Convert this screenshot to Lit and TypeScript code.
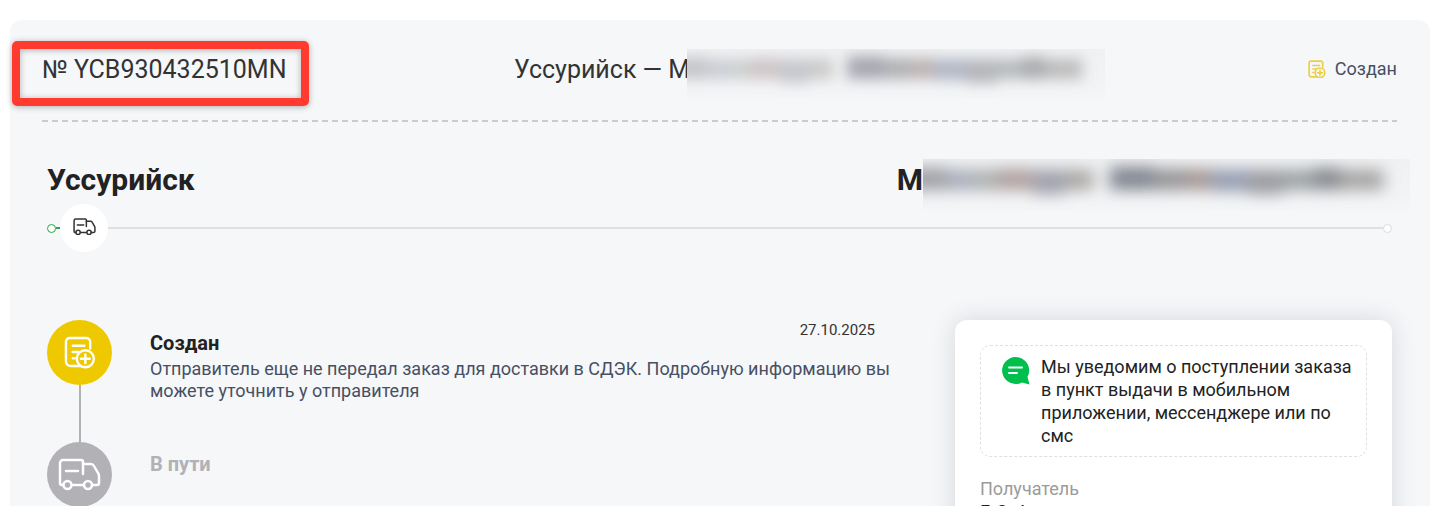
import { LitElement, html, css, svg } from "lit";
import { customElement, property } from "lit/decorators.js";

const orderPaths = svg`
  <path d="M17 31H8a5 5 0 0 1-5-5V6a4 4 0 0 1 4-4h17a4 4 0 0 1 4 4v7"/>
  <path d="M10 10h12M10 16.500h6M10 23h2"/>
  <circle cx="23" cy="23.500" r="8.800"/>
  <path d="M23 19v9M18.500 23.500h9"/>`;

const truckPaths = svg`
  <path d="M4 26H3a2 2 0 0 1-2-2V4a3 3 0 0 1 3-3h18a2 2 0 0 1 2 2v12"/>
  <path d="M24 5h8q2 0 3 2l4 7q1 1 1 3v7a2 2 0 0 1-2 2h-5M13 26h11"/>
  <path d="M7 12h12"/>
  <circle cx="8.500" cy="26" r="4"/><circle cx="29" cy="26" r="4"/>`;

@customElement("status-icon")
class StatusIcon extends LitElement {
  @property() name = "order";
  static styles = css`
    :host { display: block; }
    svg { display: block; width: 100%; fill: none; stroke: currentColor; stroke-width: var(--stroke, 2.5); stroke-linecap: round; stroke-linejoin: round; }
  `;
  render() {
    return this.name === "truck"
      ? html`<svg viewBox="-1 -1 43 33" aria-hidden="true">${truckPaths}</svg>`
      : html`<svg viewBox="1 0 33 34" aria-hidden="true">${orderPaths}</svg>`;
  }
}

@customElement("redacted-text")
class RedactedText extends LitElement {
  static styles = css`
    :host { display: block; overflow: hidden; background: linear-gradient(#f0f1f3, #f2f3f5 70%, #f5f6f8); }
    svg { display: block; width: 100%; height: 100%; }
  `;
  @property({ type: Boolean }) strong = false;
  render() {
    const lead = this.strong ? 0.66 : 0.36;
    const tail = this.strong ? 0.74 : 0.52;
    return html`<svg viewBox="0 0 480 50" preserveAspectRatio="none" aria-hidden="true">
      <defs><filter id="soft" x="-10%" y="-80%" width="120%" height="260%"><feGaussianBlur stdDeviation="8 7"/></filter></defs>
      <g filter="url(#soft)">
        <g fill-opacity=${lead}>
          <rect x="-20" y="8" width="44" height="22" fill="#77797e"/>
          <rect x="24" y="10" width="24" height="20" fill="#858a9e"/>
          <rect x="48" y="10" width="24" height="20" fill="#8a928e"/>
          <rect x="72" y="9" width="36" height="21" fill="#907876"/>
          <rect x="108" y="10" width="32" height="24" fill="#777988"/>
          <rect x="140" y="10" width="28" height="20" fill="#87837c"/>
        </g>
        <g fill-opacity=${tail}>
          <rect x="184" y="7" width="44" height="23" fill="#5f6472"/>
          <rect x="228" y="9" width="30" height="21" fill="#777578"/>
          <rect x="258" y="9" width="26" height="21" fill="#8c7b74"/>
          <rect x="284" y="10" width="36" height="21" fill="#75809a"/>
          <rect x="320" y="10" width="36" height="24" fill="#7d7f84"/>
          <rect x="356" y="10" width="28" height="20" fill="#80878a"/>
          <rect x="384" y="8" width="28" height="22" fill="#66696e"/>
          <rect x="412" y="10" width="42" height="20" fill="#8c8b89"/>
        </g>
      </g>
    </svg>`;
  }
}

@customElement("app-root")
class AppRoot extends LitElement {
  static styles = css`
    :host { display: block; height: 100vh; overflow: hidden; background: #fff; font-family: Roboto, "Noto Sans", sans-serif; color: #212121; }
    * { box-sizing: border-box; }
    h1, h2, h3, p, ol, dl, dd { margin: 0; padding: 0; }
    .page { padding: 20px 11px 0 10px; }
    .order { min-height: 100vh; background: #f5f7f9; border-radius: 12px; padding: 0 33px 0 32px; }
    .head { display: grid; grid-template-columns: 472px 1fr auto; align-items: center; height: 100px; }
    .number, .route { font-size: 25px; line-height: 32px; font-weight: 400; color: #333; white-space: nowrap; }
    .number { position: relative; justify-self: start; }
    .mark { position: absolute; inset: -13px -22px -20px -30px; border: 8px solid #ff3b30; border-radius: 5px; box-shadow: 0 1px 6px rgba(0,0,0,.3), inset 0 1px 6px rgba(0,0,0,.3); }
    .route { display: flex; align-items: center; height: 32px; }
    .route redacted-text { width: 418px; height: 50px; margin: 8px 0 0 -3px; position: relative; }
    .status { display: flex; align-items: center; gap: 9px; font-size: 18px; line-height: 24px; color: #474f63; padding-bottom: 2px; }
    .status status-icon { width: 18px; color: #ebcf3f; --stroke: 3; }
    .rule { height: 2px; background: repeating-linear-gradient(90deg, #caccce 0 6px, transparent 6px 10px); }
    .body { padding: 38px 5px 0; }
    .cities { display: flex; justify-content: space-between; }
    .city { display: flex; font-size: 30px; line-height: 40px; font-weight: 700; color: #222; }
    .city redacted-text { width: 487px; height: 52px; margin-top: 10px; }
    .dest { margin-right: -18px; height: 40px; align-items: center; }
    .track { display: flex; align-items: center; height: 48px; margin-top: 4px; }
    .dot { width: 9px; height: 9px; border-radius: 50%; border: 1px solid #d9dbdd; background: #fff; }
    .start { border-color: #28a745; }
    .done { width: 4px; height: 2px; background: #28a745; }
    .van { width: 48px; height: 48px; display: grid; place-items: center; border-radius: 50%; background: #fff; color: #333; padding-bottom: 3px; }
    .van status-icon { width: 23px; --stroke: 2.8; }
    .left { flex: 1; height: 2px; background: #dddfe1; }
    .content { display: grid; grid-template-columns: minmax(0, 1fr) 437px; gap: 60px; margin-top: 68px; align-items: start; }
    .steps { list-style: none; }
    .step { display: grid; grid-template-columns: 65px 1fr; column-gap: 38px; min-height: 122px; }
    .mast { display: flex; flex-direction: column; align-items: center; }
    .disc { width: 65px; height: 65px; display: grid; place-items: center; border-radius: 50%; background: #b1b1b6; color: #fff; }
    .active .disc { background: #efc900; }
    .disc status-icon { width: 32px; }
    .waiting .disc status-icon { width: 43px; }
    .line { flex: 1; width: 2px; background: #b1b1b6; }
    .date { display: block; text-align: right; padding-right: 20px; font-size: 15px; line-height: 20px; color: #333; }
    .title { font-size: 20px; line-height: 24px; font-weight: 700; color: #222; }
    .active .title { margin-top: -9px; }
    .text { font-size: 18px; line-height: 22px; color: #474f63; margin-top: 3px; }
    .waiting .title { margin-top: 10px; color: #b1b1b6; }
    .card { background: #fff; border-radius: 12px; padding: 25px; min-height: 260px; box-shadow: 0 0 24px rgba(33,37,50,.15); }
    .notice { display: grid; grid-template-columns: 28px 1fr; column-gap: 11px; padding: 9px 12px 9px 21px; border: 1px dashed #dfdfe1; border-radius: 10px; font-size: 18px; line-height: 23px; color: #222; }
    .chat { width: 28px; height: 28px; margin-top: 2px; }
    .label { margin-top: 20px; font-size: 18px; line-height: 23px; color: #9b9b9b; }
    .value { font-size: 18px; line-height: 23px; }
  `;
  render() {
    return html`<main class="page"><article class="order">
      <header class="head">
        <h1 class="number">№ YCB930432510MN<span class="mark"></span></h1>
        <div class="route">Уссурийск — М<redacted-text></redacted-text></div>
        <div class="status"><status-icon></status-icon>Создан</div>
      </header>
      <div class="rule"></div>
      <div class="body">
        <div class="cities">
          <h2 class="city">Уссурийск</h2>
          <h2 class="city dest">М<redacted-text strong></redacted-text></h2>
        </div>
        <div class="track">
          <span class="dot start"></span><span class="done"></span>
          <span class="van"><status-icon name="truck"></status-icon></span>
          <span class="left"></span><span class="dot"></span>
        </div>
        <div class="content">
          <ol class="steps">
            <li class="step active">
              <div class="mast"><span class="disc"><status-icon></status-icon></span><span class="line"></span></div>
              <div>
                <time class="date" datetime="2025-10-27">27.10.2025</time>
                <h3 class="title">Создан</h3>
                <p class="text">Отправитель еще не передал заказ для доставки в СДЭК. Подробную информацию вы можете уточнить у отправителя</p>
              </div>
            </li>
            <li class="step waiting">
              <div class="mast"><span class="disc"><status-icon name="truck"></status-icon></span><span class="line"></span></div>
              <h3 class="title">В пути</h3>
            </li>
          </ol>
          <aside class="card">
            <div class="notice">
              <svg class="chat" viewBox="0 0 28 28" aria-hidden="true"><path fill="#00bf4d" d="M13.500 0A13.500 13.500 0 1 0 20 25.400L27.500 27.500L25.500 20A13.500 13.500 0 0 0 13.500 0Z"/><path d="M7 10.500h13M7 16h8" fill="none" stroke="#fff" stroke-width="2" stroke-linecap="round"/></svg>
              <p>Мы уведомим о поступлении заказа в пункт выдачи в мобильном приложении, мессенджере или по смс</p>
            </div>
            <dl><dt class="label">Получатель</dt><dd class="value">Г. С. А.</dd></dl>
          </aside>
        </div>
      </div>
    </article></main>`;
  }
}
